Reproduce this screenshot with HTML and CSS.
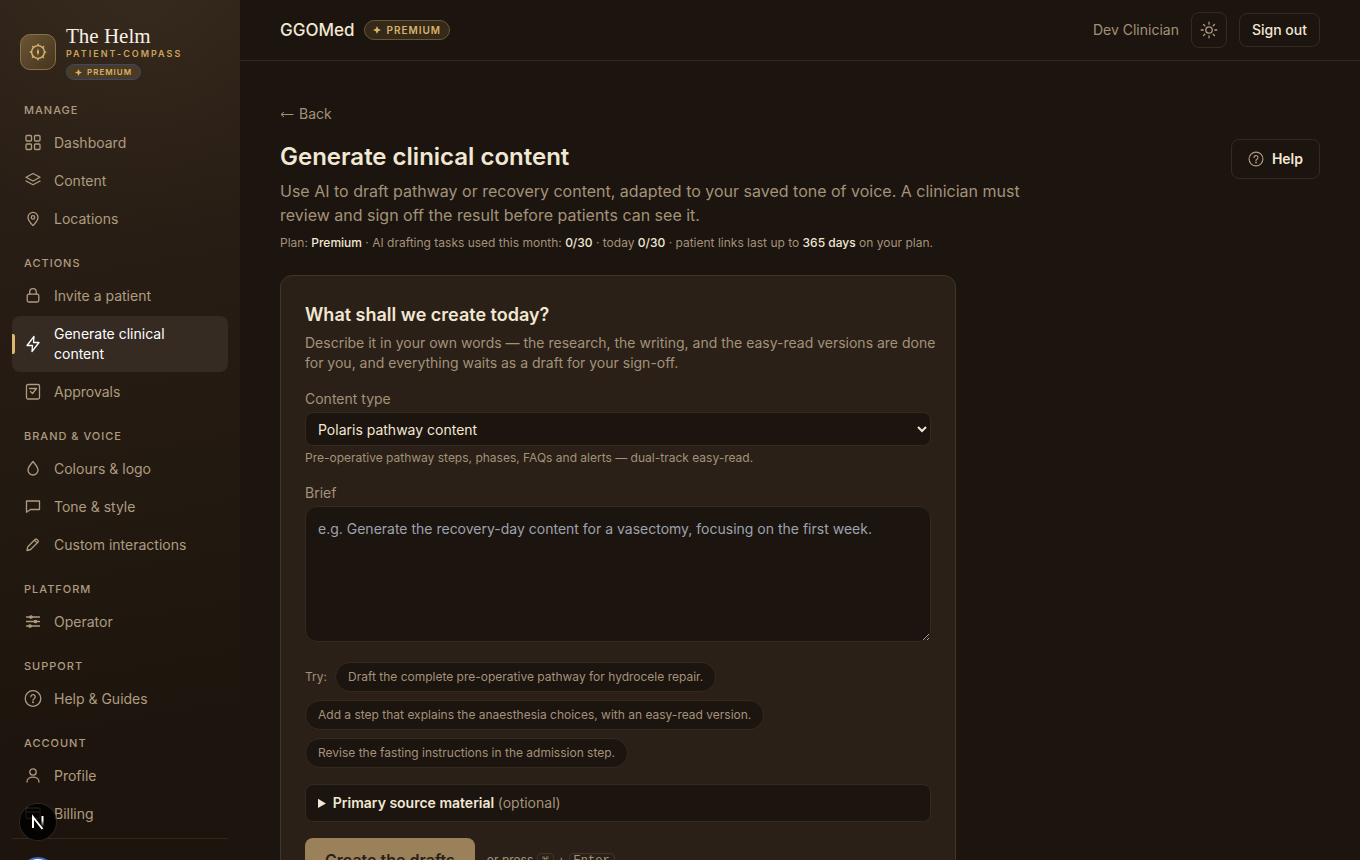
FILE: index.html
```html
<!DOCTYPE html>
<html lang="en">
<head>
    <meta charset="UTF-8">
    <meta name="viewport" content="width=device-width, initial-scale=1.0">
    <title>Generate clinical content</title>
    <link rel="stylesheet" href="styles.css">
</head>
<body>
    <div class="app">
        <aside class="sidebar">
            <div class="brand">
                <div class="brand-mark">
                    <svg width="18" height="18" viewBox="0 0 18 18" fill="none" stroke="currentColor">
                        <circle cx="9" cy="9" r="6.4" stroke-width="1.4"/>
                        <circle cx="9" cy="9" r="7.6" stroke-width="1.2" stroke-dasharray="1.6 4.37" stroke-dashoffset="0.8"/>
                        <path d="M9 5.2L10.1 9L9 12.8L7.9 9Z" fill="currentColor" stroke="none"/>
                    </svg>
                </div>
                <div class="brand-text">
                    <div class="brand-name">The Helm</div>
                    <div class="brand-sub">PATIENT-COMPASS</div>
                    <span class="badge badge-small">
                        <svg width="7" height="7" viewBox="0 0 10 10" fill="currentColor"><path d="M5 0L6.5 3.5L10 5L6.5 6.5L5 10L3.5 6.5L0 5L3.5 3.5Z"/></svg>
                        PREMIUM
                    </span>
                </div>
            </div>

            <nav class="nav">
                <div class="nav-group">
                    <h2 class="nav-title">MANAGE</h2>
                    <a class="nav-item" href="#">
                        <svg class="icon" viewBox="0 0 18 18"><rect x="2" y="1.5" width="5.5" height="5.5" rx="1"/><rect x="10.5" y="1.5" width="5.5" height="5.5" rx="1"/><rect x="2" y="10" width="5.5" height="5.5" rx="1"/><rect x="10.5" y="10" width="5.5" height="5.5" rx="1"/></svg>
                        Dashboard
                    </a>
                    <a class="nav-item" href="#">
                        <svg class="icon" viewBox="0 0 18 18"><path d="M9 1.5L16 5.2L9 9L2 5.2Z"/><path d="M2 9L9 12.8L16 9"/></svg>
                        Content
                    </a>
                    <a class="nav-item" href="#">
                        <svg class="icon" viewBox="0 0 18 18"><path d="M9 15.6C6.2 12.6 4 10 4 7.4a5 5 0 0 1 10 0C14 10 11.8 12.6 9 15.6Z"/><circle cx="9" cy="7.4" r="1.7"/></svg>
                        Locations
                    </a>
                </div>

                <div class="nav-group">
                    <h2 class="nav-title">ACTIONS</h2>
                    <a class="nav-item" href="#">
                        <svg class="icon" viewBox="0 0 18 18"><rect x="3.2" y="7.2" width="11.6" height="7.8" rx="1.5"/><path d="M5.7 7.2V5a3.3 3.3 0 0 1 6.6 0v2.2"/></svg>
                        Invite a patient
                    </a>
                    <a class="nav-item active" href="#" aria-current="page">
                        <svg class="icon" viewBox="0 0 18 18"><path d="M10 1.5L3 10.5H8.5L8 16.5L15 7.5H9.5Z"/></svg>
                        Generate clinical content
                    </a>
                    <a class="nav-item" href="#">
                        <svg class="icon" viewBox="0 0 18 18"><rect x="2.5" y="1.5" width="13" height="14.5" rx="1.5"/><path d="M5.5 5.5H12.5M6.5 8.5L8.5 10.5L12.5 5.5"/></svg>
                        Approvals
                    </a>
                </div>

                <div class="nav-group">
                    <h2 class="nav-title">BRAND &amp; VOICE</h2>
                    <a class="nav-item" href="#">
                        <svg class="icon" viewBox="0 0 18 18"><path d="M9 1.5C11 4 14 7 14 10a5 5 0 0 1-10 0C4 7 7 4 9 1.5Z"/></svg>
                        Colours &amp; logo
                    </a>
                    <a class="nav-item" href="#">
                        <svg class="icon" viewBox="0 0 18 18"><path d="M2.5 3H15.5V11.5H6.5L2.5 14.2Z"/></svg>
                        Tone &amp; style
                    </a>
                    <a class="nav-item" href="#">
                        <svg class="icon" viewBox="0 0 18 18"><path d="M3 14.5L3.8 10.7L11.3 3.2Q12 2.5 12.7 3.2L14.1 4.6Q14.8 5.3 14.1 6L6.6 13.5ZM10.4 4.1L13.2 6.9"/></svg>
                        Custom interactions
                    </a>
                </div>

                <div class="nav-group">
                    <h2 class="nav-title">PLATFORM</h2>
                    <a class="nav-item" href="#">
                        <svg class="icon" viewBox="0 0 18 18"><path d="M2.5 4H15.5M2.5 8.5H15.5M2.5 13H15.5"/><g fill="currentColor"><circle cx="7" cy="4" r="1.2"/><circle cx="11.5" cy="8.5" r="1.2"/><circle cx="6" cy="13" r="1.2"/></g></svg>
                        Operator
                    </a>
                </div>

                <div class="nav-group">
                    <h2 class="nav-title">SUPPORT</h2>
                    <a class="nav-item" href="#">
                        <svg class="icon" viewBox="0 0 18 18"><circle cx="9" cy="8.5" r="7.8"/><path d="M6.8 6.8a2.2 2.2 0 1 1 3.3 1.9Q9 9.3 9 10.2"/><circle cx="9" cy="12.3" r="0.4"/></svg>
                        Help &amp; Guides
                    </a>
                </div>

                <div class="nav-group">
                    <h2 class="nav-title">ACCOUNT</h2>
                    <a class="nav-item" href="#">
                        <svg class="icon" viewBox="0 0 18 18"><circle cx="9" cy="5" r="3.2"/><path d="M3 15C3 8.6 15 8.6 15 15"/></svg>
                        Profile
                    </a>
                    <a class="nav-item" href="#">
                        <svg class="icon" viewBox="0 0 18 18"><rect x="2" y="3" width="14" height="10.5" rx="1.5"/><path d="M2 7H16"/></svg>
                        Billing
                    </a>
                </div>
            </nav>

            <div class="sidebar-footer">
                <div class="avatar"></div>
            </div>
        </aside>

        <div class="content">
            <header class="topbar">
                <div class="org">
                    <span class="org-name">GGOMed</span>
                    <span class="badge">
                        <svg width="8" height="8" viewBox="0 0 10 10" fill="currentColor"><path d="M5 0L6.5 3.5L10 5L6.5 6.5L5 10L3.5 6.5L0 5L3.5 3.5Z"/></svg>
                        PREMIUM
                    </span>
                </div>
                <div class="account">
                    <span class="account-name">Dev Clinician</span>
                    <button class="theme-button" type="button" aria-label="Theme">
                        <svg class="icon" viewBox="0 0 18 18"><circle cx="9" cy="9" r="3.2"/><path d="M9 1.2V3.2M9 14.8V16.8M1.2 9H3.2M14.8 9H16.8M3.5 3.5L4.9 4.9M13.1 13.1L14.5 14.5M3.5 14.5L4.9 13.1M13.1 4.9L14.5 3.5"/></svg>
                    </button>
                    <button class="signout-button" type="button">Sign out</button>
                </div>
            </header>

            <main class="page">
                <a class="back" href="#">
                    <svg width="14" height="10" viewBox="0 0 14 10" fill="none" stroke="currentColor"><path d="M13.5 5.5H1M4 3L1 5.5L4 8"/></svg>
                    Back
                </a>
                <div class="page-head">
                    <div class="page-intro">
                        <h1>Generate clinical content</h1>
                        <p class="lead">Use AI to draft pathway or recovery content, adapted to your saved tone of voice. A clinician must review and sign off the result before patients can see it.</p>
                        <p class="plan">Plan: <strong>Premium</strong> · AI drafting tasks used this month: <strong>0/30</strong> · today <strong>0/30</strong> · patient links last up to <strong>365 days</strong> on your plan.</p>
                    </div>
                    <button class="help-button" type="button">
                        <svg class="icon" viewBox="0 0 18 18"><circle cx="9" cy="9" r="7.8"/><path d="M6.8 7.3a2.2 2.2 0 1 1 3.3 1.9Q9 9.8 9 10.7"/><circle cx="9" cy="12.8" r="0.4"/></svg>
                        Help
                    </button>
                </div>

                <form class="card">
                    <h2>What shall we create today?</h2>
                    <p class="card-text">Describe it in your own words — the research, the writing, and the easy-read versions are done for you, and everything waits as a draft for your sign-off.</p>

                    <label for="content-type">Content type</label>
                    <select id="content-type">
                        <option>Polaris pathway content</option>
                    </select>
                    <p class="hint">Pre-operative pathway steps, phases, FAQs and alerts — dual-track easy-read.</p>

                    <label for="brief">Brief</label>
                    <textarea id="brief" placeholder="e.g. Generate the recovery-day content for a vasectomy, focusing on the first week."></textarea>

                    <div class="suggestions">
                        <span>Try:</span>
                        <button class="chip" type="button">Draft the complete pre-operative pathway for hydrocele repair.</button>
                        <button class="chip" type="button">Add a step that explains the anaesthesia choices, with an easy-read version.</button>
                        <button class="chip" type="button">Revise the fasting instructions in the admission step.</button>
                    </div>

                    <details class="source">
                        <summary>Primary source material <span>(optional)</span></summary>
                    </details>

                    <div class="actions">
                        <button class="create-button" type="submit" disabled>Create the drafts</button>
                        <span class="shortcut">or press <kbd>⌘</kbd> + <kbd>Enter</kbd></span>
                    </div>
                </form>
            </main>
        </div>
    </div>

    <button class="dev-badge" type="button" aria-label="Dev tools">
        <svg width="36" height="36" viewBox="0 0 36 36" fill="none" stroke-width="2">
            <defs>
                <linearGradient id="fade" x1="0" y1="12" x2="0" y2="23" gradientUnits="userSpaceOnUse"><stop offset="0.4" stop-color="#fff"/><stop offset="1" stop-color="#fff" stop-opacity="0"/></linearGradient>
            </defs>
            <path d="M13 24V13L22.5 25" stroke="#fff"/>
            <path d="M22.5 12V23" stroke="url(#fade)"/>
        </svg>
    </button>
</body>
</html>
```

FILE: styles.css
```css
* {
    box-sizing: border-box;
}
body {
    margin: 0;
    font-family: 'Inter', 'Liberation Sans', sans-serif;
    font-size: 14px;
    line-height: 20px;
    background-color: #1c140e;
    color: #f1e7d3;
}
h1, h2, p {
    margin: 0;
}
a {
    color: inherit;
    text-decoration: none;
}
button, select, textarea {
    font: inherit;
    color: inherit;
}
button {
    cursor: pointer;
}
.app {
    display: flex;
    height: 100vh;
    overflow: hidden;
}
.icon {
    width: 18px;
    height: 18px;
    flex-shrink: 0;
    fill: none;
    stroke: currentColor;
    stroke-width: 1.3;
    stroke-linecap: round;
    stroke-linejoin: round;
}

/* sidebar */
.sidebar {
    width: 240px;
    flex-shrink: 0;
    display: flex;
    flex-direction: column;
    padding: 24px 12px 0;
    overflow: hidden;
    color: #ae9c80;
    background:
        radial-gradient(circle at 60% 0%, rgba(217, 178, 106, 0.05), transparent 240px),
        linear-gradient(170deg, #2e2219 0%, #261c13 35%, #1d150d 85%);
}
.brand {
    display: flex;
    align-items: center;
    gap: 10px;
    padding: 0 8px;
}
.brand-mark {
    display: flex;
    align-items: center;
    justify-content: center;
    width: 36px;
    height: 36px;
    border: 1px solid #8c7044;
    border-radius: 10px;
    background: linear-gradient(135deg, #6b5534, #44351f);
    color: #deb76e;
}
.brand-name {
    font-family: 'Liberation Serif', serif;
    font-size: 21px;
    line-height: 24px;
    color: #f7f1e6;
}
.brand-sub {
    font-size: 9px;
    line-height: 12px;
    font-weight: 600;
    letter-spacing: 2px;
    color: #cba45c;
}
.badge {
    display: inline-flex;
    align-items: center;
    gap: 5px;
    padding: 0 8px;
    border: 1px solid #6a5534;
    border-radius: 10px;
    background-color: #35291a;
    font-size: 10px;
    line-height: 18px;
    font-weight: 600;
    letter-spacing: 1px;
    color: #d9b26a;
}
.badge-small {
    display: flex;
    width: max-content;
    margin-top: 4px;
    border-color: #364873;
    background-color: #4c3b23;
    font-size: 8px;
    line-height: 14px;
}
.nav {
    display: flex;
    flex-direction: column;
    gap: 18px;
    margin-top: 22px;
}
.nav-group {
    display: flex;
    flex-direction: column;
    gap: 2px;
}
.nav-title {
    padding: 0 12px;
    margin-bottom: 5px;
    font-size: 11px;
    line-height: 16px;
    font-weight: 500;
    letter-spacing: 1px;
}
.nav-item {
    display: flex;
    align-items: center;
    gap: 12px;
    padding: 8px 12px;
    border-radius: 8px;
}
.nav-item.active {
    position: relative;
    background-color: #352b23;
    color: #fff;
}
.nav-item.active::before {
    content: '';
    position: absolute;
    left: 0;
    top: 18px;
    bottom: 18px;
    width: 3px;
    border-radius: 0 2px 2px 0;
    background-color: #deb76e;
}
.sidebar-footer {
    margin-top: 6px;
    padding: 18px 8px;
    border-top: 1px solid #30271f;
}
.avatar {
    width: 36px;
    height: 36px;
    border: 2px solid #3f68b8;
    border-radius: 50%;
    background-color: #fff;
}

/* main area */
.content {
    flex: 1;
    min-width: 0;
}
.topbar {
    display: flex;
    align-items: center;
    justify-content: space-between;
    height: 61px;
    padding: 0 40px;
    border-bottom: 1px solid #352a20;
}
.org {
    display: flex;
    align-items: center;
    gap: 10px;
}
.org-name {
    font-size: 17px;
    font-weight: 500;
}
.account {
    display: flex;
    align-items: center;
    gap: 12px;
}
.account-name {
    color: #a3927a;
}
.theme-button,
.signout-button,
.help-button {
    display: flex;
    align-items: center;
    justify-content: center;
    border: 1px solid #352a20;
    border-radius: 8px;
    background: none;
    font-weight: 500;
}
.theme-button {
    width: 36px;
    height: 36px;
    padding: 0;
    color: #ae9c80;
}
.signout-button {
    padding: 6px 12px;
}
.help-button {
    gap: 8px;
    flex-shrink: 0;
    padding: 9px 16px;
    font-weight: 600;
}
.help-button .icon {
    width: 16px;
    height: 16px;
    color: #ae9c80;
}
.page {
    padding: 43px 40px;
}
.back {
    display: inline-flex;
    align-items: center;
    gap: 5px;
    color: #a3927a;
}
.page-head {
    display: flex;
    align-items: flex-start;
    justify-content: space-between;
    margin-top: 15px;
}
.page-intro {
    max-width: 760px;
}
h1 {
    font-size: 24px;
    line-height: 36px;
    font-weight: 600;
}
.lead {
    margin-top: 4px;
    font-size: 16px;
    line-height: 24px;
    color: #a3927a;
}
.plan {
    margin-top: 6px;
    font-size: 12px;
    color: #a3927a;
}
.plan strong {
    font-weight: 500;
    color: #f1e7d3;
}
.card {
    max-width: 676px;
    margin-top: 22px;
    padding: 24px;
    border: 1px solid #41352a;
    border-radius: 12px;
    background-color: #2a2017;
}
.card h2 {
    font-size: 18px;
    line-height: 30px;
    font-weight: 600;
}
.card-text {
    margin-top: 3px;
    margin-right: -12px;
    color: #a3927a;
}
.card label {
    display: block;
    margin-top: 16px;
    color: #a3927a;
}
select,
textarea,
.source {
    display: block;
    width: 100%;
    border: 1px solid #352a20;
    border-radius: 8px;
    background-color: #1c140e;
}
select {
    height: 34px;
    margin-top: 3px;
    padding: 0 8px;
}
textarea {
    height: 136px;
    margin-top: 3px;
    padding: 12px;
    border-radius: 12px;
    resize: vertical;
}
textarea::placeholder {
    color: #9ca3af;
}
.hint {
    margin-top: 3px;
    font-size: 12px;
    line-height: 18px;
    color: #a3927a;
}
.suggestions {
    display: flex;
    flex-wrap: wrap;
    align-items: center;
    gap: 8px;
    margin-top: 20px;
    font-size: 12px;
    color: #a3927a;
}
.chip {
    padding: 4px 12px;
    border: 1px solid #352a20;
    border-radius: 15px;
    background-color: #1c140e;
}
.source {
    margin-top: 16px;
    padding: 8px 12px;
}
.source summary {
    font-weight: 600;
    cursor: pointer;
}
.source span {
    font-weight: 400;
    color: #a3927a;
}
.actions {
    display: flex;
    align-items: center;
    gap: 12px;
    margin-top: 16px;
}
.create-button {
    padding: 10px 20px;
    border: 0;
    border-radius: 8px;
    background-color: #9a815a;
    font-size: 16px;
    line-height: 24px;
    font-weight: 600;
    color: #2a2017;
}
.shortcut {
    font-size: 12px;
    color: #a3927a;
}
kbd {
    padding: 0 4px;
    border: 1px solid #41352a;
    border-radius: 4px;
    font-family: 'Liberation Mono', monospace;
    font-size: 12px;
}

.dev-badge {
    position: fixed;
    left: 20px;
    bottom: 20px;
    width: 36px;
    height: 36px;
    padding: 0;
    border: 0;
    border-radius: 50%;
    background-color: rgba(0, 0, 0, 0.85);
    box-shadow: 0 0 0 1px #2c2621;
}
.dev-badge svg {
    display: block;
}
```
